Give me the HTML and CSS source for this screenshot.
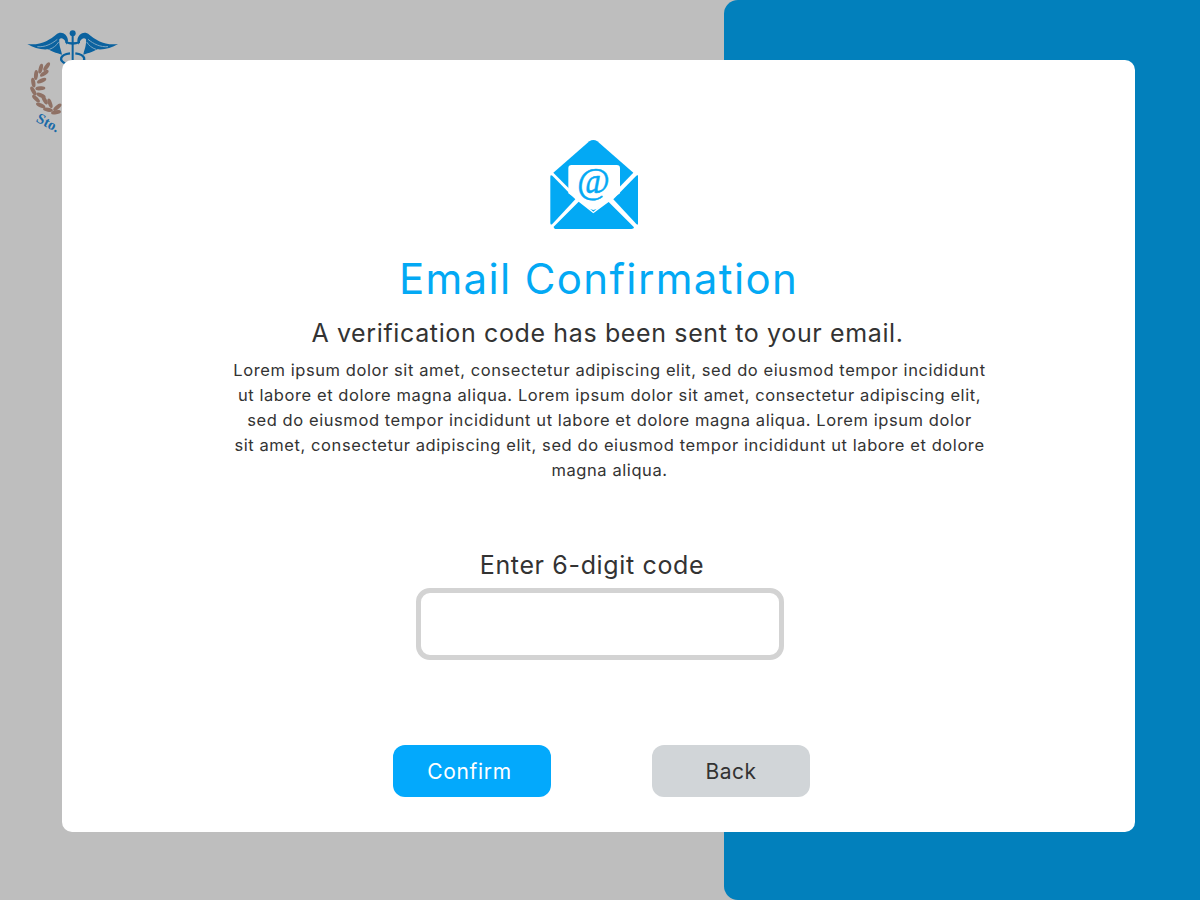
FILE: index.html
```html
<!DOCTYPE html>
<html lang="en">
<head>
<meta charset="utf-8">
<title>Email Confirmation</title>
<link rel="stylesheet" href="styles.css">
</head>
<body>
<div class="stage">
  <div class="left">
    <svg class="logo" viewBox="0 0 330 360" width="110" height="120" aria-hidden="true">
      <defs>
        <g id="wing">
          <path class="logo-blue" d="M22 72 C60 78 92 58 108 44 C122 32 142 40 144 62 L140 74 C136 56 124 50 118 58 C116 76 124 92 126 104 C108 100 92 92 84 88 C64 90 40 84 22 72Z"/>
          <path class="logo-gap" d="M52 80 C75 82 95 72 112 58"/>
          <path class="logo-gap" d="M88 88 C100 84 110 76 116 66"/>
        </g>
      </defs>
      <g class="logo-blue">
        <circle cx="158" cy="40" r="9"/>
        <rect x="155" y="48" width="6" height="85"/>
        <path d="M136 62 Q158 72 180 62 L180 69 Q158 79 136 69Z"/>
      </g>
      <use href="#wing"/>
      <use href="#wing" transform="matrix(-1 0 0 1 316 0)"/>
      <path class="logo-snake" d="M150 100 C118 104 116 122 138 132"/>
      <path class="logo-snake" d="M166 100 C198 104 200 122 178 132"/>
      <g class="logo-brown">
        <ellipse cx="80" cy="140" rx="15" ry="6" transform="rotate(-55 80 140)"/>
        <ellipse cx="62" cy="146" rx="15" ry="6" transform="rotate(-75 62 146)"/>
        <ellipse cx="73" cy="160" rx="15" ry="6" transform="rotate(-35 73 160)"/>
        <ellipse cx="48" cy="165" rx="15" ry="6" transform="rotate(-85 48 165)"/>
        <ellipse cx="65" cy="182" rx="15" ry="6" transform="rotate(-25 65 182)"/>
        <ellipse cx="40" cy="188" rx="15" ry="6" transform="rotate(80 40 188)"/>
        <ellipse cx="61" cy="205" rx="15" ry="6" transform="rotate(-5 61 205)"/>
        <ellipse cx="40" cy="213" rx="15" ry="6" transform="rotate(60 40 213)"/>
        <ellipse cx="63" cy="226" rx="15" ry="6" transform="rotate(25 63 226)"/>
        <ellipse cx="48" cy="236" rx="15" ry="6" transform="rotate(45 48 236)"/>
        <ellipse cx="74" cy="240" rx="15" ry="6" transform="rotate(60 74 240)"/>
        <ellipse cx="62" cy="256" rx="15" ry="6" transform="rotate(25 62 256)"/>
        <ellipse cx="90" cy="250" rx="15" ry="6" transform="rotate(70 90 250)"/>
        <ellipse cx="84" cy="269" rx="15" ry="6" transform="rotate(10 84 269)"/>
        <ellipse cx="112" cy="262" rx="15" ry="6" transform="rotate(-40 112 262)"/>
        <ellipse cx="108" cy="277" rx="15" ry="6" transform="rotate(-10 108 277)"/>
      </g>
      <text class="logo-text" transform="translate(46 304) rotate(28)">Sto.</text>
    </svg>
  </div>
  <div class="right"></div>
  <main class="card">
    <svg class="mail-icon" viewBox="30 27 264 270" width="88" height="90" aria-hidden="true">
      <path class="mail-fill" d="M148 34 Q160 26 172 34 L280 128 L206 205 L160 245 L116 205 L40 128Z"/>
      <path class="mail-fill" d="M31 140 Q31 133 37 137 L106 208 L37 282 Q31 287 31 278Z"/>
      <path class="mail-fill" d="M295 140 Q295 133 289 137 L220 208 L289 282 Q295 287 295 278Z"/>
      <path class="mail-fill" d="M41 290 L116 215 L160 250 L206 216 L282 292 Q282 297 274 297 L50 297 Q41 297 41 290Z"/>
      <path class="mail-sheet" d="M95 105 H230 Q240 105 240 115 V190 L178 232 Q160 248 142 232 L85 190 V115 Q85 105 95 105Z"/>
      <text class="mail-at" x="160" y="189" text-anchor="middle">@</text>
    </svg>
    <h1 class="title">Email Confirmation</h1>
    <h2 class="subtitle">A verification code has been sent to your email.</h2>
    <p class="body-text">Lorem ipsum dolor sit amet, consectetur adipiscing elit, sed do eiusmod tempor incididunt<br>ut labore et dolore magna aliqua. Lorem ipsum dolor sit amet, consectetur adipiscing elit,<br>sed do eiusmod tempor incididunt ut labore et dolore magna aliqua. Lorem ipsum dolor<br>sit amet, consectetur adipiscing elit, sed do eiusmod tempor incididunt ut labore et dolore<br>magna aliqua.</p>
    <label class="code-label" for="code">Enter 6-digit code</label>
    <input class="code-input" id="code" type="text">
    <div class="actions">
      <button class="btn btn-primary" type="button">Confirm</button>
      <button class="btn btn-secondary" type="button">Back</button>
    </div>
  </main>
</div>
</body>
</html>
```
FILE: styles.css
```css
* { box-sizing: border-box; }
html, body { margin: 0; padding: 0; }
body {
  font-family: Inter, "Open Sans", "Liberation Sans", sans-serif;
  color: #333;
}
.stage {
  position: relative;
  width: 1200px;
  height: 900px;
  display: grid;
  grid-template-columns: 724px 476px;
  background: #bebebe;
  overflow: hidden;
}
.left { padding: 20px; }
.logo { display: block; }
.logo-blue { fill: #0b629f; }
.logo-gap { fill: none; stroke: #7fa6c2; stroke-width: 3; }
.logo-snake { fill: none; stroke: #0b629f; stroke-width: 7; }
.logo-brown { fill: #8f7165; }
.logo-text {
  font-family: "Liberation Serif", serif;
  font-weight: 700;
  font-size: 44px;
  fill: #1a6aa8;
}
.right {
  background: #0280bc;
  border-radius: 14px 0 0 14px;
}
.card {
  position: absolute;
  left: 62px;
  top: 60px;
  width: 1073px;
  height: 772px;
  background: #fff;
  border-radius: 10px;
  display: flex;
  flex-direction: column;
  align-items: flex-start;
  padding-top: 79px;
}
.mail-icon { display: block; margin-left: 488px; }
.mail-fill { fill: #03a9f4; }
.mail-sheet { fill: #fff; }
.mail-at {
  font-family: "Liberation Serif", serif;
  font-style: italic;
  font-size: 106px;
  fill: #03a9f4;
  stroke: #03a9f4;
  stroke-width: 1.5px;
}
.title {
  width: 100%;
  margin: 25px 0 0;
  font-size: 42px;
  font-weight: 400;
  line-height: 50px;
  letter-spacing: 1.35px;
  color: #03a9f4;
  text-align: center;
}
.subtitle {
  width: 1091px;
  margin: 13px 0 0;
  font-size: 25px;
  font-weight: 400;
  line-height: 32px;
  letter-spacing: 0.63px;
  text-align: center;
}
.body-text {
  width: 1095px;
  margin: 9px 0 0;
  font-size: 16.5px;
  line-height: 25px;
  letter-spacing: 0.58px;
  white-space: nowrap;
  text-align: center;
}
.code-label {
  width: 1060px;
  margin-top: 66px;
  font-size: 25px;
  line-height: 32px;
  letter-spacing: 0.65px;
  text-align: center;
}
.code-input {
  display: block;
  width: 368px;
  height: 72px;
  margin: 7px 0 0 354px;
  border: 5px solid #d3d3d3;
  border-radius: 14px;
  background: #fff;
  outline: none;
}
.actions {
  display: flex;
  gap: 101px;
  margin: 85px 0 0 331px;
}
.btn {
  width: 158px;
  height: 52px;
  border: 0;
  border-radius: 12px;
  font-family: inherit;
  font-size: 21px;
  letter-spacing: 0.5px;
}
.btn-primary {
  padding: 0 5px 0 0;
  letter-spacing: 0.7px;
  background: #03a9fc;
  color: #fff;
}
.btn-secondary { background: #d1d5d8; color: #333; }
```
